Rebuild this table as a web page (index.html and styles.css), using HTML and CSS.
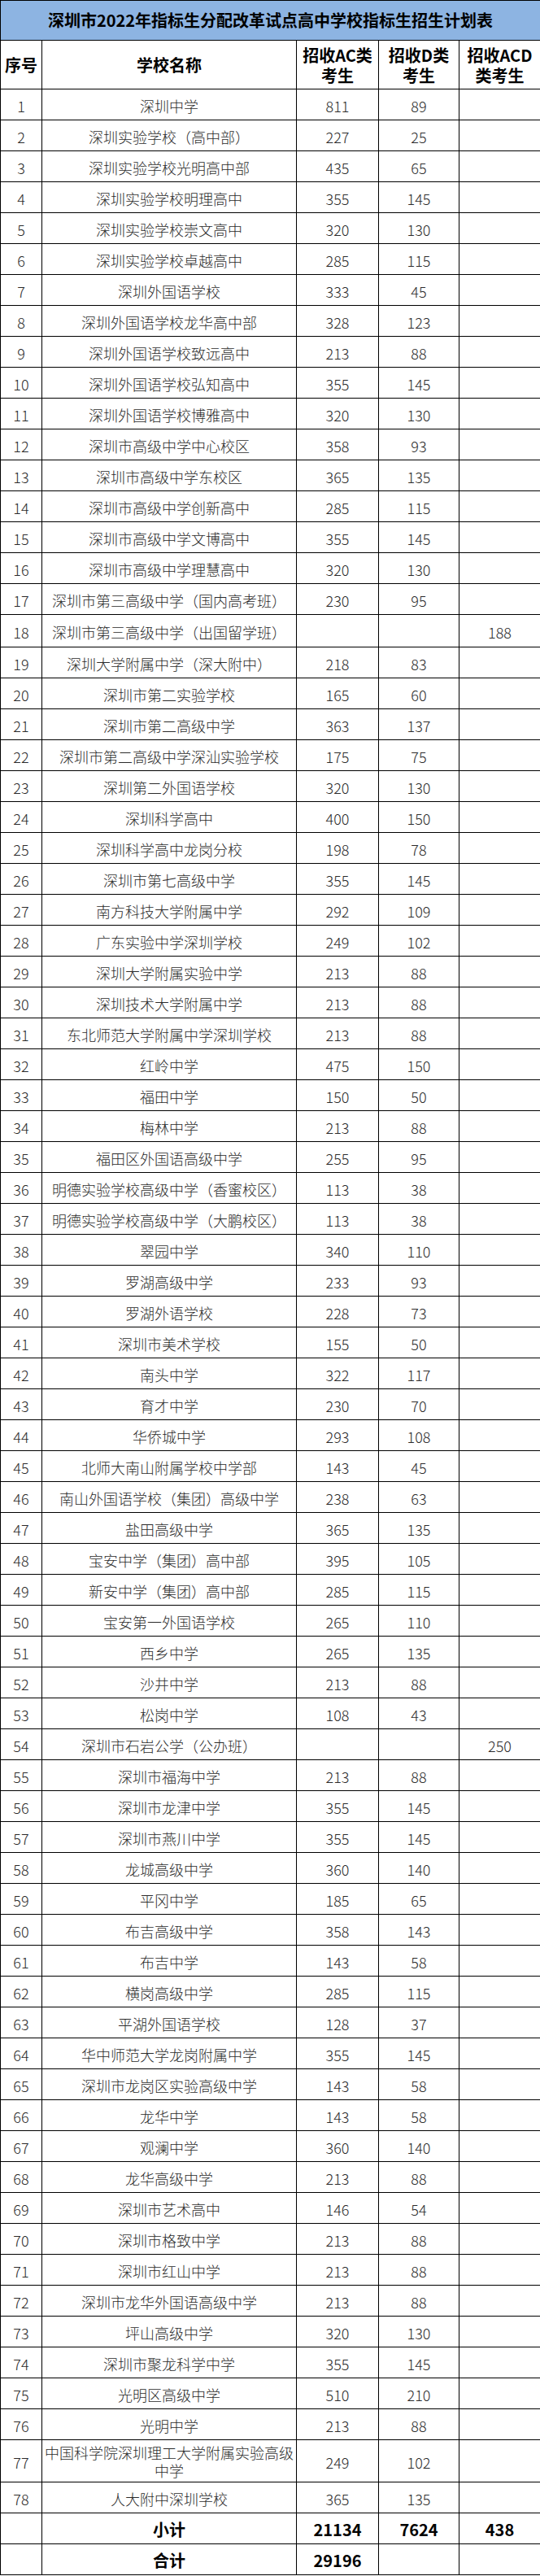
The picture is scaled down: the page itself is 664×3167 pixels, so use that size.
FILE: index.html
```html
<!DOCTYPE html>
<html lang="zh-CN">
<head>
<meta charset="utf-8">
<title>深圳市2022年指标生分配改革试点高中学校指标生招生计划表</title>
<link rel="stylesheet" href="styles.css">
</head>
<body>
<table class="plan">
<colgroup>
<col class="c-no"><col class="c-name"><col class="c-ac"><col class="c-d"><col class="c-acd">
</colgroup>
<thead>
<tr class="title-row"><th colspan="5" class="title">深圳市2022年指标生分配改革试点高中学校指标生招生计划表</th></tr>
<tr class="head-row"><th>序号</th><th>学校名称</th><th>招收AC类<br>考生</th><th>招收D类<br>考生</th><th>招收ACD<br>类考生</th></tr>
</thead>
<tbody>
<tr><td>1</td><td>深圳中学</td><td>811</td><td>89</td><td></td></tr>
<tr><td>2</td><td>深圳实验学校（高中部）</td><td>227</td><td>25</td><td></td></tr>
<tr><td>3</td><td>深圳实验学校光明高中部</td><td>435</td><td>65</td><td></td></tr>
<tr><td>4</td><td>深圳实验学校明理高中</td><td>355</td><td>145</td><td></td></tr>
<tr><td>5</td><td>深圳实验学校崇文高中</td><td>320</td><td>130</td><td></td></tr>
<tr><td>6</td><td>深圳实验学校卓越高中</td><td>285</td><td>115</td><td></td></tr>
<tr><td>7</td><td>深圳外国语学校</td><td>333</td><td>45</td><td></td></tr>
<tr><td>8</td><td>深圳外国语学校龙华高中部</td><td>328</td><td>123</td><td></td></tr>
<tr><td>9</td><td>深圳外国语学校致远高中</td><td>213</td><td>88</td><td></td></tr>
<tr><td>10</td><td>深圳外国语学校弘知高中</td><td>355</td><td>145</td><td></td></tr>
<tr><td>11</td><td>深圳外国语学校博雅高中</td><td>320</td><td>130</td><td></td></tr>
<tr><td>12</td><td>深圳市高级中学中心校区</td><td>358</td><td>93</td><td></td></tr>
<tr><td>13</td><td>深圳市高级中学东校区</td><td>365</td><td>135</td><td></td></tr>
<tr><td>14</td><td>深圳市高级中学创新高中</td><td>285</td><td>115</td><td></td></tr>
<tr><td>15</td><td>深圳市高级中学文博高中</td><td>355</td><td>145</td><td></td></tr>
<tr><td>16</td><td>深圳市高级中学理慧高中</td><td>320</td><td>130</td><td></td></tr>
<tr><td>17</td><td>深圳市第三高级中学（国内高考班）</td><td>230</td><td>95</td><td></td></tr>
<tr class="tall"><td>18</td><td>深圳市第三高级中学（出国留学班）</td><td></td><td></td><td>188</td></tr>
<tr><td>19</td><td>深圳大学附属中学（深大附中）</td><td>218</td><td>83</td><td></td></tr>
<tr><td>20</td><td>深圳市第二实验学校</td><td>165</td><td>60</td><td></td></tr>
<tr><td>21</td><td>深圳市第二高级中学</td><td>363</td><td>137</td><td></td></tr>
<tr><td>22</td><td>深圳市第二高级中学深汕实验学校</td><td>175</td><td>75</td><td></td></tr>
<tr><td>23</td><td>深圳第二外国语学校</td><td>320</td><td>130</td><td></td></tr>
<tr><td>24</td><td>深圳科学高中</td><td>400</td><td>150</td><td></td></tr>
<tr><td>25</td><td>深圳科学高中龙岗分校</td><td>198</td><td>78</td><td></td></tr>
<tr><td>26</td><td>深圳市第七高级中学</td><td>355</td><td>145</td><td></td></tr>
<tr><td>27</td><td>南方科技大学附属中学</td><td>292</td><td>109</td><td></td></tr>
<tr><td>28</td><td>广东实验中学深圳学校</td><td>249</td><td>102</td><td></td></tr>
<tr><td>29</td><td>深圳大学附属实验中学</td><td>213</td><td>88</td><td></td></tr>
<tr><td>30</td><td>深圳技术大学附属中学</td><td>213</td><td>88</td><td></td></tr>
<tr><td>31</td><td>东北师范大学附属中学深圳学校</td><td>213</td><td>88</td><td></td></tr>
<tr><td>32</td><td>红岭中学</td><td>475</td><td>150</td><td></td></tr>
<tr><td>33</td><td>福田中学</td><td>150</td><td>50</td><td></td></tr>
<tr><td>34</td><td>梅林中学</td><td>213</td><td>88</td><td></td></tr>
<tr><td>35</td><td>福田区外国语高级中学</td><td>255</td><td>95</td><td></td></tr>
<tr><td>36</td><td>明德实验学校高级中学（香蜜校区）</td><td>113</td><td>38</td><td></td></tr>
<tr><td>37</td><td>明德实验学校高级中学（大鹏校区）</td><td>113</td><td>38</td><td></td></tr>
<tr><td>38</td><td>翠园中学</td><td>340</td><td>110</td><td></td></tr>
<tr><td>39</td><td>罗湖高级中学</td><td>233</td><td>93</td><td></td></tr>
<tr><td>40</td><td>罗湖外语学校</td><td>228</td><td>73</td><td></td></tr>
<tr><td>41</td><td>深圳市美术学校</td><td>155</td><td>50</td><td></td></tr>
<tr><td>42</td><td>南头中学</td><td>322</td><td>117</td><td></td></tr>
<tr><td>43</td><td>育才中学</td><td>230</td><td>70</td><td></td></tr>
<tr><td>44</td><td>华侨城中学</td><td>293</td><td>108</td><td></td></tr>
<tr><td>45</td><td>北师大南山附属学校中学部</td><td>143</td><td>45</td><td></td></tr>
<tr><td>46</td><td>南山外国语学校（集团）高级中学</td><td>238</td><td>63</td><td></td></tr>
<tr><td>47</td><td>盐田高级中学</td><td>365</td><td>135</td><td></td></tr>
<tr><td>48</td><td>宝安中学（集团）高中部</td><td>395</td><td>105</td><td></td></tr>
<tr><td>49</td><td>新安中学（集团）高中部</td><td>285</td><td>115</td><td></td></tr>
<tr><td>50</td><td>宝安第一外国语学校</td><td>265</td><td>110</td><td></td></tr>
<tr><td>51</td><td>西乡中学</td><td>265</td><td>135</td><td></td></tr>
<tr><td>52</td><td>沙井中学</td><td>213</td><td>88</td><td></td></tr>
<tr><td>53</td><td>松岗中学</td><td>108</td><td>43</td><td></td></tr>
<tr><td>54</td><td>深圳市石岩公学（公办班）</td><td></td><td></td><td>250</td></tr>
<tr><td>55</td><td>深圳市福海中学</td><td>213</td><td>88</td><td></td></tr>
<tr><td>56</td><td>深圳市龙津中学</td><td>355</td><td>145</td><td></td></tr>
<tr><td>57</td><td>深圳市燕川中学</td><td>355</td><td>145</td><td></td></tr>
<tr><td>58</td><td>龙城高级中学</td><td>360</td><td>140</td><td></td></tr>
<tr><td>59</td><td>平冈中学</td><td>185</td><td>65</td><td></td></tr>
<tr><td>60</td><td>布吉高级中学</td><td>358</td><td>143</td><td></td></tr>
<tr><td>61</td><td>布吉中学</td><td>143</td><td>58</td><td></td></tr>
<tr><td>62</td><td>横岗高级中学</td><td>285</td><td>115</td><td></td></tr>
<tr><td>63</td><td>平湖外国语学校</td><td>128</td><td>37</td><td></td></tr>
<tr><td>64</td><td>华中师范大学龙岗附属中学</td><td>355</td><td>145</td><td></td></tr>
<tr><td>65</td><td>深圳市龙岗区实验高级中学</td><td>143</td><td>58</td><td></td></tr>
<tr><td>66</td><td>龙华中学</td><td>143</td><td>58</td><td></td></tr>
<tr><td>67</td><td>观澜中学</td><td>360</td><td>140</td><td></td></tr>
<tr><td>68</td><td>龙华高级中学</td><td>213</td><td>88</td><td></td></tr>
<tr><td>69</td><td>深圳市艺术高中</td><td>146</td><td>54</td><td></td></tr>
<tr><td>70</td><td>深圳市格致中学</td><td>213</td><td>88</td><td></td></tr>
<tr><td>71</td><td>深圳市红山中学</td><td>213</td><td>88</td><td></td></tr>
<tr><td>72</td><td>深圳市龙华外国语高级中学</td><td>213</td><td>88</td><td></td></tr>
<tr><td>73</td><td>坪山高级中学</td><td>320</td><td>130</td><td></td></tr>
<tr><td>74</td><td>深圳市聚龙科学中学</td><td>355</td><td>145</td><td></td></tr>
<tr><td>75</td><td>光明区高级中学</td><td>510</td><td>210</td><td></td></tr>
<tr><td>76</td><td>光明中学</td><td>213</td><td>88</td><td></td></tr>
<tr class="double"><td>77</td><td class="wrap">中国科学院深圳理工大学附属实验高级中学</td><td>249</td><td>102</td><td></td></tr>
<tr><td>78</td><td>人大附中深圳学校</td><td>365</td><td>135</td><td></td></tr>
</tbody>
<tfoot>
<tr class="sum"><td></td><td>小计</td><td>21134</td><td>7624</td><td>438</td></tr>
<tr class="sum"><td></td><td>合计</td><td>29196</td><td></td><td></td></tr>
</tfoot>
</table>
</body>
</html>
```

FILE: styles.css
```css
html, body {
  margin: 0;
  padding: 0;
  background: #ffffff;
}

.plan {
  width: 664px;
  table-layout: fixed;
  border-collapse: separate;
  border-spacing: 0;
  border-top: 1px solid #000;
  border-left: 1px solid #000;
  font-family: "Noto Sans CJK SC", "Noto Sans", sans-serif;
  color: #2b2b2b;
}

.c-no { width: 51px; }
.c-name { width: 313px; }
.c-ac { width: 101px; }
.c-d { width: 99px; }
.c-acd { width: 100px; }

.plan th,
.plan td {
  box-sizing: border-box;
  border-right: 1px solid #000;
  border-bottom: 1px solid #000;
  padding: 0;
  text-align: center;
  vertical-align: middle;
  overflow: hidden;
}

.plan td {
  height: 38px;
  font-size: 18px;
  font-weight: 300;
  line-height: 22px;
  white-space: nowrap;
  padding-top: 2px;
}

.title-row .title {
  height: 49px;
  background: #8db4e2;
  color: #000;
  font-size: 20px;
  font-weight: 700;
  line-height: 24px;
  letter-spacing: 0;
}

.head-row th {
  height: 60px;
  color: #000;
  font-size: 20px;
  font-weight: 700;
  line-height: 25px;
}

.plan tr.tall td { height: 40px; }

.plan tr.double td { height: 52px; }

.plan td.wrap {
  white-space: normal;
  padding: 1px 3px 0;
}

.plan tr.sum td {
  color: #000;
  font-size: 20px;
  font-weight: 700;
}
```
